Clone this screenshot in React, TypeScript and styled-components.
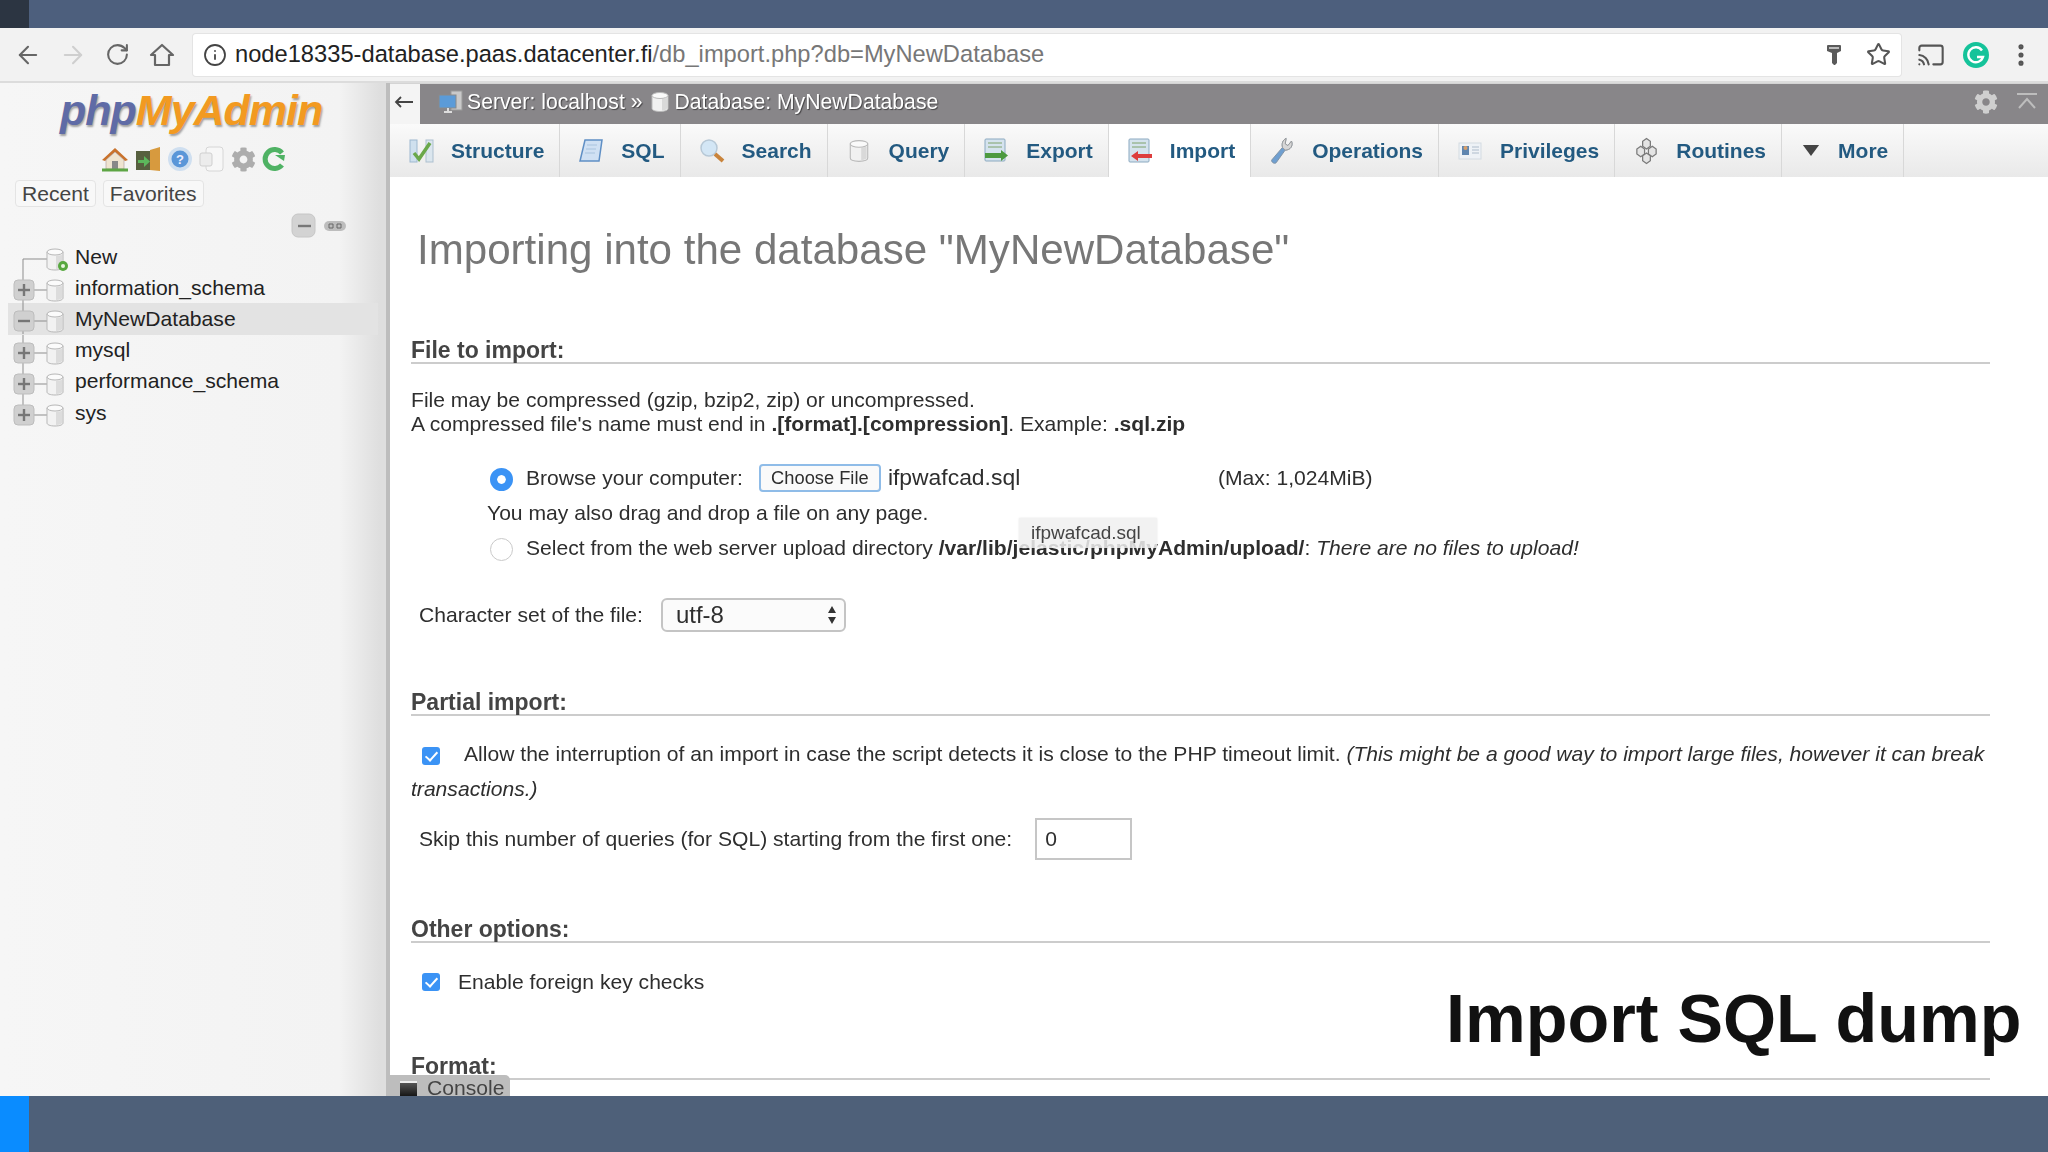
import React from "react";
import styled, { createGlobalStyle } from "styled-components";
import { ArrowLeft, ArrowRight, RotateCw, Info, Star, Cast, MoreVertical } from "lucide-react";
import { FaCog } from "react-icons/fa";

const GlobalStyle = createGlobalStyle`
  html, body { margin: 0; padding: 0; background: #fff; }
  body { font-family: "Liberation Sans", Arial, sans-serif; color: #333; }
  * { box-sizing: border-box; }
`;

const DbIcon = ({ size = 22 }: { size?: number }) => (
  <svg width={size} height={size} viewBox="0 0 22 22">
    <path d="M3 4.5v13c0 1.8 3.6 3 8 3s8-1.2 8-3v-13z" fill="#f1f1f1" stroke="#b9b9b9" />
    <path d="M13 8v11.5c3-.3 5-1 5-2.2V7z" fill="#d9d9d9" />
    <ellipse cx="11" cy="4.5" rx="8" ry="3" fill="#fafafa" stroke="#b9b9b9" />
  </svg>
);

const TreeIcon = ({ kind, first, last }: { kind: "new" | "plus" | "minus"; first?: boolean; last?: boolean }) => (
  <svg width="67" height="31" viewBox="9 0 67 31">
    <path d={`M24 ${first ? 18 : 0}V${last ? 18 : 31}`} stroke="#8d8d8d" fill="none" />
    <path d="M24 18H48" stroke="#8d8d8d" fill="none" />
    {kind !== "new" && (
      <>
        <rect x="15" y="8" width="20" height="20" rx="4" fill="#d0d0d0" stroke="#bdbdbd" />
        <path d="M19 18h12" stroke="#777" strokeWidth="2.4" />
        {kind === "plus" && <path d="M25 12v12" stroke="#777" strokeWidth="2.4" />}
      </>
    )}
    <g transform="translate(46 7)">
      <path d="M2 4v15c0 1.6 2.8 3 8 3s8-1.4 8-3V4z" fill="#f2f2f2" stroke="#b7b7b7" />
      <path d="M11 8v13c4-.2 6-1 6-2.5V7z" fill="#dcdcdc" />
      <ellipse cx="10" cy="4" rx="8" ry="3" fill="#fbfbfb" stroke="#b7b7b7" />
    </g>
    {kind === "new" && (
      <>
        <circle cx="64" cy="25" r="5" fill="#57a83f" />
        <circle cx="64" cy="25" r="2" fill="#e8f5e0" />
      </>
    )}
  </svg>
);

const HomeIcon = () => (
  <svg width="28" height="26" viewBox="0 0 28 26">
    <path d="M1 14 14 2l13 12-3 1-10-9-10 9z" fill="#c9722c" />
    <path d="M5 14 14 6l9 8v9H5z" fill="#efe4d0" stroke="#a99" strokeWidth=".6" />
    <rect x="11" y="15" width="6" height="8" fill="#888" />
    <path d="M1 24h26" stroke="#5da544" strokeWidth="3" />
  </svg>
);
const ExitIcon = () => (
  <svg width="26" height="26" viewBox="0 0 26 26">
    <rect x="1" y="5" width="17" height="19" fill="#57603f" />
    <path d="M15 4 25 1v24l-10-1z" fill="#d79a3e" />
    <path d="M3 14h6v-4l6 5.500-6 5.500v-4H3z" fill="#5cb85c" />
  </svg>
);
const HelpIcon = () => (
  <svg width="26" height="26" viewBox="0 0 26 26">
    <circle cx="13" cy="13" r="12" fill="#cfdff0" />
    <circle cx="13" cy="13" r="8.500" fill="#5a96d8" />
    <text x="13" y="18" fontSize="13" fontWeight="700" textAnchor="middle" fill="#eef">?</text>
  </svg>
);
const DocIcon = () => (
  <svg width="26" height="26" viewBox="0 0 26 26">
    <rect x="7" y="1" width="17" height="24" rx="3" fill="#f7f7f7" stroke="#d6d6d6" />
    <rect x="1" y="7" width="12" height="13" rx="2" fill="#ececec" stroke="#cfcfcf" />
  </svg>
);
const GearSmall = styled(FaCog)`
  width: 25px;
  height: 25px;
  color: #adadad;
`;
const ReloadIcon = () => (
  <svg width="24" height="26" viewBox="0 0 24 26">
    <path d="M20 7A9.500 9.500 0 1 0 20 19" fill="none" stroke="#4fb264" strokeWidth="5" />
    <path d="M13 9h10l-1 6z" fill="#4fb264" />
  </svg>
);

const tabIcons: Record<string, React.ReactNode> = {
  Structure: (
    <svg width="27" height="26" viewBox="0 0 27 26">
      <rect x="2" y="2" width="7" height="22" fill="#cfe0ee" stroke="#9db8cf" />
      <rect x="18" y="2" width="7" height="22" fill="#dbe6ee" stroke="#adc0cf" />
      <path d="M6 15l5 6L22 5" fill="none" stroke="#6aa84a" strokeWidth="3.500" />
    </svg>
  ),
  SQL: (
    <svg width="27" height="26" viewBox="0 0 27 26">
      <path d="M7 2h17l-3 21H2z" fill="#cfe0f3" stroke="#5f8fc5" strokeWidth="1.500" />
      <path d="M9 7h10M8 11h10M7 15h10" stroke="#a8c3de" />
    </svg>
  ),
  Search: (
    <svg width="27" height="26" viewBox="0 0 27 26">
      <circle cx="10" cy="10" r="8" fill="#d3e6f5" stroke="#b7c8d6" strokeWidth="1.500" />
      <path d="M16 16l8 7" stroke="#c9843c" strokeWidth="4" />
    </svg>
  ),
  Query: <DbIcon size={24} />,
  Export: (
    <svg width="27" height="26" viewBox="0 0 27 26">
      <rect x="2" y="1" width="20" height="22" rx="1" fill="#d5e3ee" stroke="#8ba9c0" />
      <path d="M5 5h14M5 9h14" stroke="#7fa26a" />
      <path d="M2 15h16v-3l7 5.500-7 5.500v-3H2z" fill="#4d9a3f" />
    </svg>
  ),
  Import: (
    <svg width="27" height="26" viewBox="0 0 27 26">
      <rect x="2" y="1" width="20" height="23" rx="1" fill="#d5e3ee" stroke="#8ba9c0" />
      <path d="M5 5h14M5 9h14" stroke="#7fa26a" />
      <path d="M25 16H11v-3l-7 5 7 5v-3h14z" fill="#dd3d3d" />
    </svg>
  ),
  Operations: (
    <svg width="30" height="30" viewBox="0 0 30 30">
      <path d="M3 25 15 11c-1-4 0-8 4-10l-1 6 3 2 4-5c2 5-1 10-7 10L8 28c-2 2-6-1-5-3z" fill="#6f9fd0" stroke="#7d8f9f" />
      <path d="M15 11c-1-4 0-8 4-10l-1 6 3 2 4-5c2 5-1 10-7 10z" fill="#d7d7d7" stroke="#999" />
    </svg>
  ),
  Privileges: (
    <svg width="24" height="20" viewBox="0 0 24 20">
      <rect x="1" y="2" width="22" height="16" fill="#eef2f6" stroke="#d4dbe2" />
      <rect x="4" y="5" width="7" height="9" fill="#5f86b0" />
      <circle cx="7.500" cy="7" r="2" fill="#d9a06a" />
      <path d="M14 6h7M14 9h7M14 12h7" stroke="#aebccb" />
    </svg>
  ),
  Routines: (
    <svg width="28" height="28" viewBox="0 0 28 28" fill="#e4e4e4" stroke="#7a7a7a" strokeWidth="1.300">
      <path d="M14 1l4 3v5l-4 3-4-3V4z" />
      <path d="M8 9l4 3v5l-4 3-4-3v-5z" />
      <path d="M20 9l4 3v5l-4 3-4-3v-5z" />
      <path d="M14 16l4 3v5l-4 3-4-3v-5z" />
    </svg>
  ),
  More: (
    <svg width="18" height="13" viewBox="0 0 20 14">
      <path d="M1 1h18l-9 12z" fill="#444" />
    </svg>
  ),
};

const tabs = ["Structure", "SQL", "Search", "Query", "Export", "Import", "Operations", "Privileges", "Routines", "More"];
const dbs: { name: string; kind: "new" | "plus" | "minus" }[] = [
  { name: "New", kind: "new" },
  { name: "information_schema", kind: "plus" },
  { name: "MyNewDatabase", kind: "minus" },
  { name: "mysql", kind: "plus" },
  { name: "performance_schema", kind: "plus" },
  { name: "sys", kind: "plus" },
];

export default function App() {
  return (
    <Page>
      <GlobalStyle />
      <TopBar>
        <TopCorner />
      </TopBar>
      <Soft>
        <Toolbar>
          <NavButton><ArrowLeft size={28} strokeWidth={1.8} /></NavButton>
          <NavButton $faded><ArrowRight size={28} strokeWidth={1.8} /></NavButton>
          <NavButton><RotateCw size={25} strokeWidth={2} /></NavButton>
          <NavButton>
            <svg width="26" height="26" viewBox="0 0 26 26">
              <path d="M2 13 13 3l11 10h-4v10H6V13z" fill="none" stroke="#666" strokeWidth="2.200" strokeLinejoin="round" />
            </svg>
          </NavButton>
          <UrlBox>
            <Info size={24} strokeWidth={1.8} color="#444" />
            <UrlText>
              node18335-database.paas.datacenter.fi<UrlPath>/db_import.php?db=MyNewDatabase</UrlPath>
            </UrlText>
            <KeyGlyph>
              <svg width="18" height="24" viewBox="0 0 18 24">
                <path d="M2 3q0-1 1-1h12q1 0 1 1v5l-4 2v10l-2 2H9l-2-2V10L2 8z" fill="#5a5a5a" />
                <rect x="4" y="4" width="10" height="2" fill="#bbb" />
              </svg>
            </KeyGlyph>
            <Star size={25} strokeWidth={2} color="#555" />
          </UrlBox>
          <ToolbarEnd>
            <Cast size={28} strokeWidth={1.8} color="#555" />
            <svg width="28" height="28" viewBox="0 0 28 28">
              <circle cx="14" cy="14" r="13" fill="#15c39a" />
              <path d="M20 9.500A7.500 7.500 0 1 0 21 16h-6" fill="none" stroke="#fff" strokeWidth="2.400" />
            </svg>
            <MoreVertical size={28} strokeWidth={2.4} color="#555" />
          </ToolbarEnd>
        </Toolbar>
        <Body>
          <Sidebar>
            <Logo>
              <LogoBlue>php</LogoBlue>
              <LogoOrange>MyAdmin</LogoOrange>
            </Logo>
            <QuickIcons>
              <HomeIcon />
              <ExitIcon />
              <HelpIcon />
              <DocIcon />
              <GearSmall />
              <ReloadIcon />
            </QuickIcons>
            <RecentRow>
              <RecentTab>Recent</RecentTab>
              <RecentTab>Favorites</RecentTab>
            </RecentRow>
            <CollapseRow>
              <svg width="28" height="26" viewBox="0 0 28 26">
                <rect x="1" y="1" width="23" height="23" rx="6" fill="#d3d3d3" stroke="#c6c6c6" />
                <path d="M7 13h13" stroke="#777" strokeWidth="2.400" />
              </svg>
              <svg width="24" height="14" viewBox="0 0 24 14">
                <rect x="1" y="2" width="22" height="10" rx="5" fill="#bdbdbd" />
                <path d="M6 5h4v4H6zM14 5h4v4h-4z" fill="none" stroke="#666" />
              </svg>
            </CollapseRow>
            <Tree>
              {dbs.map((db, i) => (
                <TreeRow key={db.name} $active={db.name === "MyNewDatabase"}>
                  <TreeIcon kind={db.kind} first={i === 0} last={i === dbs.length - 1} />
                  <TreeLabel>{db.name}</TreeLabel>
                </TreeRow>
              ))}
            </Tree>
          </Sidebar>
          <Main>
            <Breadcrumb>
              <BackBox>
                <svg width="20" height="12" viewBox="0 0 20 12">
                  <path d="M19 6H2M7 1 2 6l5 5" fill="none" stroke="#444" strokeWidth="1.800" />
                </svg>
              </BackBox>
              <Crumbs>
                <svg width="26" height="24" viewBox="0 0 26 24">
                  <rect x="13" y="1" width="11" height="19" fill="#c9c9c9" stroke="#999" />
                  <rect x="1" y="5" width="17" height="13" fill="#5b9bd8" stroke="#8a8a8a" />
                  <path d="M6 22h8M10 18v4" stroke="#ddd" strokeWidth="2" />
                </svg>
                <CrumbText>Server: localhost »</CrumbText>
                <DbIcon size={22} />
                <CrumbText>Database: MyNewDatabase</CrumbText>
              </Crumbs>
              <BarActions>
                <FaCog size={24} color="#cfcfcf" />
                <svg width="22" height="20" viewBox="0 0 22 20">
                  <path d="M1 2h20M3 16l8-9 8 9" fill="none" stroke="#bdbdbd" strokeWidth="2" />
                </svg>
              </BarActions>
            </Breadcrumb>
            <TabBar>
              {tabs.map((t) => (
                <Tab key={t} $active={t === "Import"}>
                  <TabIcon $narrow={t === "More"}>{tabIcons[t]}</TabIcon>
                  {t}
                </Tab>
              ))}
            </TabBar>
            <Content>
              <Heading>Importing into the database "MyNewDatabase"</Heading>

              <Legend $top={64}>File to import:</Legend>
              <Notes>
                File may be compressed (gzip, bzip2, zip) or uncompressed.
                <br />
                A compressed file's name must end in <b>.[format].[compression]</b>. Example: <b>.sql.zip</b>
              </Notes>
              <RadioBlock>
                <OptionRow>
                  <Radio $checked />
                  Browse your computer:
                  <ChooseFile>Choose File</ChooseFile>
                  <FileName>ifpwafcad.sql</FileName>
                  (Max: 1,024MiB)
                </OptionRow>
                <OptionRow>You may also drag and drop a file on any page.</OptionRow>
                <OptionRow>
                  <Radio />
                  Select from the web server upload directory&nbsp;
                  <b>/var/lib/jelastic/phpMyAdmin/upload/</b>:&nbsp;<i>There are no files to upload!</i>
                </OptionRow>
                <Tooltip>ifpwafcad.sql</Tooltip>
              </RadioBlock>
              <CharsetRow>
                Character set of the file:
                <SelectBox>
                  <SelectValue>utf-8</SelectValue>
                  <svg width="10" height="20" viewBox="0 0 10 20">
                    <path d="M5 1l4 7H1zM5 19l4-7H1z" fill="#333" />
                  </svg>
                </SelectBox>
              </CharsetRow>

              <Legend $top={57}>Partial import:</Legend>
              <AllowText>
                <Check $inline />
                Allow the interruption of an import in case the script detects it is close to the PHP timeout limit.{" "}
                <i>(This might be a good way to import large files, however it can break</i>
                <br />
                <i>transactions.)</i>
              </AllowText>
              <SkipRow>
                Skip this number of queries (for SQL) starting from the first one:
                <NumberBox>0</NumberBox>
              </SkipRow>

              <Legend $top={56}>Other options:</Legend>
              <CheckRow>
                <Check />
                Enable foreign key checks
              </CheckRow>

              <Legend $top={54}>Format:</Legend>
            </Content>
            <ConsoleTab>
              <ConsoleGlyph />
              Console
            </ConsoleTab>
          </Main>
        </Body>
      </Soft>
      <Caption>Import SQL dump</Caption>
      <BottomBar>
        <BottomCorner />
      </BottomBar>
    </Page>
  );
}

const Page = styled.div`
  position: relative;
  width: 2048px;
  height: 1152px;
  display: flex;
  flex-direction: column;
  overflow: hidden;
`;

const TopBar = styled.div`
  height: 28px;
  flex: none;
  background: #4d5f7d;
`;

const TopCorner = styled.div`
  width: 29px;
  height: 100%;
  background: #2c3542;
`;

const Soft = styled.div`
  flex: 1;
  min-height: 0;
  display: flex;
  flex-direction: column;
  filter: blur(0.5px);
`;

const Toolbar = styled.div`
  height: 55px;
  flex: none;
  display: flex;
  align-items: center;
  background: #f2f2f2;
  border-bottom: 2px solid #dcdcdc;
  padding-left: 6px;
`;

const NavButton = styled.div<{ $faded?: boolean }>`
  width: 44.500px;
  display: flex;
  justify-content: center;
  color: ${(p) => (p.$faded ? "#cfcfcf" : "#666")};
`;

const UrlBox = styled.div`
  margin-left: 9px;
  width: 1708px;
  height: 42px;
  display: flex;
  align-items: center;
  gap: 8px;
  padding: 0 10px 0 10px;
  background: #fff;
  border-radius: 3px;
  box-shadow: 0 0 0 1px #e4e4e4;
`;

const UrlText = styled.div`
  flex: 1;
  font-size: 23.700px;
  color: #222;
  white-space: nowrap;
`;

const UrlPath = styled.span`
  color: #777;
`;

const KeyGlyph = styled.span`
  display: flex;
  margin-right: 15px;
`;

const ToolbarEnd = styled.div`
  display: flex;
  align-items: center;
  gap: 17px;
  margin-left: 16px;
`;

const Body = styled.div`
  flex: 1;
  min-height: 0;
  display: flex;
`;

const Sidebar = styled.div`
  width: 390px;
  flex: none;
  display: flex;
  flex-direction: column;
  background: linear-gradient(90deg, #f6f6f6 0%, #f3f3f3 88%, #dedede 98.500%);
  border-right: 4px solid #bdbdbd;
`;

const Logo = styled.div`
  margin-top: -1px;
  padding-left: 60px;
  height: 56px;
  font-size: 43px;
  line-height: 56px;
  font-weight: 700;
  font-style: italic;
  letter-spacing: -1px;
  text-shadow: 1px 2px 2px rgba(0, 0, 0, 0.35);
`;

const LogoBlue = styled.span`
  color: #5f6ba6;
`;

const LogoOrange = styled.span`
  color: #f29a21;
`;

const QuickIcons = styled.div`
  margin-top: 7px;
  padding-left: 101px;
  display: flex;
  align-items: center;
  gap: 6px;
  height: 28px;
`;

const RecentRow = styled.div`
  margin-top: 7px;
  padding-left: 15px;
  display: flex;
  gap: 7px;
`;

const RecentTab = styled.div`
  height: 27px;
  padding: 0 6px;
  display: flex;
  align-items: center;
  font-size: 21.100px;
  color: #444;
  background: #f8f8f8;
  border: 1px solid #e4e4e4;
  border-radius: 4px;
`;

const CollapseRow = styled.div`
  margin-top: 4px;
  padding-left: 291px;
  display: flex;
  align-items: center;
  gap: 4px;
  height: 30px;
`;

const Tree = styled.div`
  display: flex;
  flex-direction: column;
`;

const TreeRow = styled.div<{ $active?: boolean }>`
  height: 31.200px;
  margin-left: 8px;
  margin-right: 8px;
  display: flex;
  align-items: center;
  background: ${(p) => (p.$active ? "#e3e3e3" : "transparent")};
`;

const TreeLabel = styled.span`
  font-size: 21.100px;
  color: #222;
`;

const Main = styled.div`
  position: relative;
  flex: 1;
  min-width: 0;
  overflow: hidden;
  display: flex;
  flex-direction: column;
`;

const Breadcrumb = styled.div`
  height: 41px;
  flex: none;
  display: flex;
  align-items: center;
  background: #888689;
  border-top: 1px solid #d4d4d4;
`;

const BackBox = styled.div`
  width: 30px;
  height: 100%;
  display: flex;
  align-items: center;
  justify-content: center;
  padding: 0 3px 4px 0;
  background: #f4f4f4;
`;

const Crumbs = styled.div`
  margin-left: 18px;
  padding-bottom: 4px;
  flex: 1;
  display: flex;
  align-items: center;
  gap: 3px;
`;

const CrumbText = styled.span`
  font-size: 21.200px;
  color: #fff;
  text-shadow: 1px 1px 1px rgba(0, 0, 0, 0.5);
  margin-right: 4px;
`;

const BarActions = styled.div`
  display: flex;
  align-items: center;
  gap: 18px;
  padding: 0 10px 4px 0;
`;

const TabBar = styled.div`
  height: 53px;
  flex: none;
  display: flex;
  background: linear-gradient(#fafafa, #e9e9e9);
`;

const Tab = styled.div<{ $active?: boolean }>`
  padding: 0 15px 0 18px;
  display: flex;
  align-items: center;
  gap: 16px;
  font-size: 21px;
  font-weight: 700;
  color: #235a81;
  white-space: nowrap;
  border-right: 1px solid #d8d8d8;
  background: ${(p) => (p.$active ? "#fff" : "transparent")};
`;

const TabIcon = styled.span<{ $narrow?: boolean }>`
  width: ${(p) => (p.$narrow ? 22 : 27)}px;
  display: flex;
  justify-content: center;
`;

const Content = styled.div`
  padding: 50px 58px 0 21px;
  font-size: 21.100px;
  color: #2e2e2e;
`;

const Heading = styled.h1`
  margin: 0;
  padding-left: 6px;
  font-size: 42.100px;
  line-height: 46px;
  font-weight: 400;
  color: #777;
`;

const Legend = styled.div<{ $top: number }>`
  margin-top: ${(p) => p.$top}px;
  height: 27px;
  font-size: 23px;
  line-height: 26px;
  font-weight: 700;
  color: #444;
  border-bottom: 2px solid #ccc;
`;

const Notes = styled.div`
  margin-top: 24px;
  line-height: 24px;
`;

const RadioBlock = styled.div`
  position: relative;
  margin-top: 24px;
  padding-left: 76px;
`;

const OptionRow = styled.div`
  height: 35px;
  display: flex;
  align-items: center;
  white-space: pre;
`;

const Radio = styled.span<{ $checked?: boolean }>`
  width: 23px;
  height: 23px;
  margin: 3px 13px 0 3px;
  border-radius: 50%;
  flex: none;
  background: ${(p) => (p.$checked ? "#3b93f5" : "#fff")};
  border: ${(p) => (p.$checked ? "7px solid #3b93f5" : "1.500px solid #c9c9c9")};
  box-shadow: ${(p) => (p.$checked ? "inset 0 0 0 5px #fff" : "none")};
`;

const ChooseFile = styled.span`
  margin-left: 16px;
  width: 122px;
  height: 28px;
  display: flex;
  align-items: center;
  justify-content: center;
  font-size: 18.300px;
  background: #fafafa;
  border: 2px solid #8fbce8;
  border-radius: 4px;
`;

const FileName = styled.span`
  width: 330px;
  margin-left: 7px;
  font-size: 22.900px;
`;

const Tooltip = styled.div`
  position: absolute;
  left: 608px;
  top: 58px;
  width: 138px;
  height: 30px;
  padding: 4px 0 0 12px;
  font-size: 19px;
  color: #444;
  background: rgba(240, 240, 240, 0.85);
  box-shadow: 0 0 2px rgba(0, 0, 0, 0.1);
`;

const CharsetRow = styled.div`
  margin-top: 33px;
  padding-left: 8px;
  display: flex;
  align-items: center;
  gap: 18px;
`;

const SelectBox = styled.div`
  width: 185px;
  height: 34px;
  display: flex;
  align-items: center;
  justify-content: space-between;
  padding: 0 7px 0 13px;
  background: #fbfbfb;
  border: 2px solid #c4c4c4;
  border-radius: 6px;
`;

const SelectValue = styled.span`
  font-size: 24px;
`;

const AllowText = styled.div`
  margin-top: 20px;
  line-height: 35px;
  white-space: nowrap;
`;

const Check = styled.span<{ $inline?: boolean }>`
  display: inline-flex;
  align-items: center;
  justify-content: center;
  width: 18px;
  height: 18px;
  margin: ${(p) => (p.$inline ? "0 24px -3px 11px" : "0 18px 0 11px")};
  flex: none;
  background: #3b93f5;
  border-radius: 3px;
  &::after {
    content: "";
    width: 5px;
    height: 10px;
    margin-top: -2px;
    border: solid #fff;
    border-width: 0 2px 2px 0;
    transform: rotate(42deg);
  }
`;

const SkipRow = styled.div`
  margin-top: 12px;
  padding-left: 8px;
  display: flex;
  align-items: center;
  gap: 23px;
`;

const NumberBox = styled.div`
  width: 97px;
  height: 42px;
  display: flex;
  align-items: center;
  padding-left: 8px;
  border: 2px solid #c6c6c6;
`;

const CheckRow = styled.div`
  margin-top: 21px;
  height: 35px;
  display: flex;
  align-items: center;
`;

const ConsoleTab = styled.div`
  position: absolute;
  left: 0;
  bottom: 0;
  width: 120px;
  height: 21px;
  display: flex;
  align-items: flex-start;
  gap: 10px;
  padding-left: 10px;
  font-size: 21.100px;
  line-height: 26px;
  color: #444;
  background: #bdbdbd;
  border-radius: 0 5px 0 0;
`;

const ConsoleGlyph = styled.span`
  width: 17px;
  height: 16px;
  margin-top: 6px;
  background: linear-gradient(#555, #111);
  border-top: 2px solid #eee;
`;

const Caption = styled.div`
  position: absolute;
  left: 1446px;
  top: 976px;
  font-size: 68.300px;
  line-height: 84px;
  font-weight: 700;
  color: #111;
  white-space: nowrap;
`;

const BottomBar = styled.div`
  height: 56px;
  flex: none;
  background: #4e6079;
`;

const BottomCorner = styled.div`
  width: 29px;
  height: 100%;
  background: #0a8cff;
`;
